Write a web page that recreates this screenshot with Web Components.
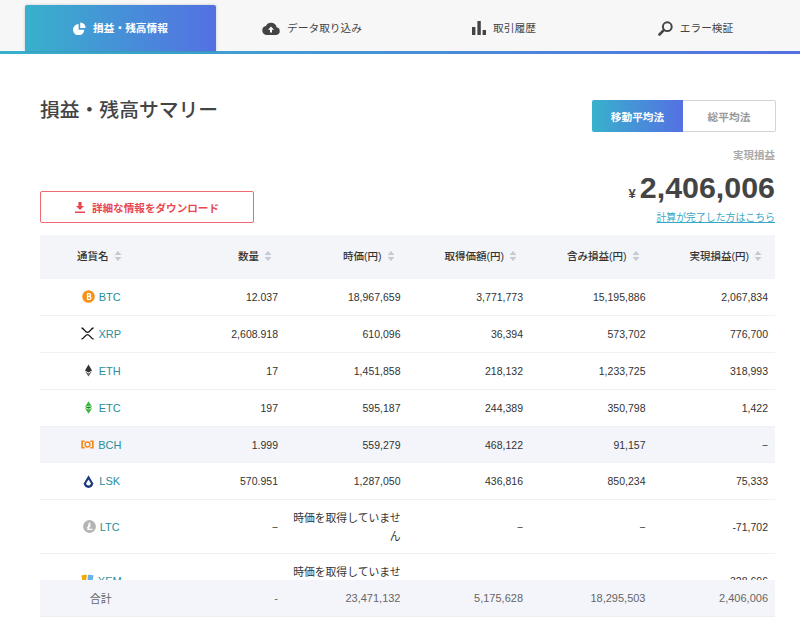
<!DOCTYPE html>
<html lang="ja">
<head>
<meta charset="utf-8">
<title>損益・残高サマリー</title>
<style>
html, body { margin: 0; height: 631px; overflow: hidden; background: #fff; }
body { font-family: "Liberation Sans", "Noto Sans CJK JP", sans-serif; color: #444; }
</style>
</head>
<body>
<app-tabs>
  <tab-item active label="損益・残高情報" icon="pie"></tab-item>
  <tab-item label="データ取り込み" icon="cloud"></tab-item>
  <tab-item label="取引履歴" icon="bars"></tab-item>
  <tab-item label="エラー検証" icon="search"></tab-item>
</app-tabs>
<summary-head></summary-head>
<pl-table></pl-table>

<script>
const tabIcons = {
  pie: '<svg width="13" height="13" viewBox="0 0 13 13"><path fill="#fff" d="M5.6 2.1v5.6h5.6A5.6 5.6 0 1 1 5.6 2.1z"/><path fill="#fff" d="M7.2 0.4A5.5 5.5 0 0 1 12.6 6H7.2z"/></svg>',
  cloud: '<svg width="18" height="13" viewBox="0 0 18 13"><path fill="#444" d="M14.6 5.3A5.6 5.6 0 0 0 4 3.9 4.6 4.6 0 0 0 4.4 13h9.9a3.9 3.9 0 0 0 .3-7.7z"/><path fill="#fff" d="M9 4.6l3 3.2h-2v2.6H8V7.8H6z"/></svg>',
  bars: '<svg width="14" height="14" viewBox="0 0 14 14"><path fill="#444" d="M0 6h3.4v8H0zM5.4 0h3.4v14H5.4zM10.6 9H14v5h-3.4z"/></svg>',
  search: '<svg width="15" height="15" viewBox="0 0 15 15"><circle cx="9.3" cy="5.7" r="4.4" fill="none" stroke="#444" stroke-width="2"/><path stroke="#444" stroke-width="2.6" stroke-linecap="round" d="M5.8 9.2 1.5 13.5"/></svg>'
};

class AppTabs extends HTMLElement {
  constructor() {
    super();
    this.attachShadow({ mode: 'open' }).innerHTML = `
    <style>
      :host { display: block; height: 51px; background: #f7f7f7; border-bottom: 3px solid; border-image: linear-gradient(90deg, #38b1cc, #5470e3) 1; }
      .row { display: grid; grid-template-columns: 191px 192px 192px 191px; padding: 5px 0 0 25px; height: 46px; }
    </style>
    <div class="row"><slot></slot></div>`;
  }
}
customElements.define('app-tabs', AppTabs);

class TabItem extends HTMLElement {
  constructor() {
    super();
    const active = this.hasAttribute('active');
    this.attachShadow({ mode: 'open' }).innerHTML = `
    <style>
      :host { display: flex; align-items: center; justify-content: center; gap: 7px; height: 46px; font-size: 10.7px; color: ${active ? '#fff' : '#444'}; font-weight: ${active ? 700 : 400}; border-radius: 2px 2px 0 0; ${active ? 'background: linear-gradient(90deg, #38b1cc, #5470e3); box-shadow: 0 0 3px rgba(0,0,0,.2);' : ''} }
      svg { display: block; }
      span { position: relative; top: -1px; }
    </style>
    ${tabIcons[this.getAttribute('icon')]}<span>${this.getAttribute('label')}</span>`;
  }
}
customElements.define('tab-item', TabItem);

class MethodToggle extends HTMLElement {
  constructor() {
    super();
    this.attachShadow({ mode: 'open' }).innerHTML = `
    <style>
      :host { display: flex; width: 184px; height: 32px; font-size: 10.7px; font-weight: 700; border-radius: 2px; }
      div { display: flex; align-items: center; justify-content: center; }
      .on { width: 91px; color: #fff; background: linear-gradient(90deg, #38b1cc, #5470e3); border-radius: 2px 0 0 2px; }
      .off { flex: 1; color: #999; border: 1px solid #d4d4d4; border-left: 0; border-radius: 0 2px 2px 0; }
    </style>
    <div class="on">移動平均法</div><div class="off">総平均法</div>`;
  }
}
customElements.define('method-toggle', MethodToggle);

class SummaryHead extends HTMLElement {
  constructor() {
    super();
    this.attachShadow({ mode: 'open' }).innerHTML = `
    <style>
      :host { display: flex; justify-content: space-between; height: 135px; margin: 46px 24px 0 40px; }
      .left { display: flex; flex-direction: column; justify-content: space-between; padding-bottom: 12px; }
      h1 { margin: 0; font-size: 19.8px; line-height: 20px; font-weight: 500; color: #444; }
      .dl { display: flex; align-items: center; justify-content: center; gap: 7px; width: 214px; height: 32px; box-sizing: border-box; border: 1px solid #ee6a70; border-radius: 2px; color: #e8474f; font-size: 10.6px; font-weight: 700; }
      .right { display: flex; flex-direction: column; align-items: flex-end; padding-right: 1px; }
      method-toggle { margin-right: -1px; }
      .lbl { margin-top: 17px; font-size: 10.5px; line-height: 12px; font-weight: 700; color: #aaa; }
      .amt { display: flex; align-items: baseline; gap: 4px; margin-top: 8px; color: #444; font-weight: 700; line-height: 36px; }
      .amt b { font-size: 30.4px; }
      .amt span { font-size: 13px; }
      a { margin-top: -1px; font-size: 9.9px; line-height: 14px; color: #38a9c6; text-decoration: underline; }
    </style>
    <div class="left">
      <h1>損益・残高サマリー</h1>
      <div class="dl"><svg width="10" height="11" viewBox="0 0 10 11"><path fill="#e8474f" d="M3.4 0h3.2v4H9L5 8 1 4h2.4zM0 9.4h10V11H0z"/></svg><span>詳細な情報をダウンロード</span></div>
    </div>
    <div class="right">
      <method-toggle></method-toggle>
      <div class="lbl">実現損益</div>
      <div class="amt"><span>¥</span><b>2,406,006</b></div>
      <a>計算が完了した方はこちら</a>
    </div>`;
  }
}
customElements.define('summary-head', SummaryHead);

const coinIcons = {
  BTC: '<svg viewBox="0 0 13 13"><circle cx="6.5" cy="6.5" r="6.3" fill="#f7931a"/><path fill="none" stroke="#fff" stroke-width="1.3" d="M5 3.6h2.1a1.4 1.4 0 0 1 0 2.8H5m0 0h2.4a1.5 1.5 0 0 1 0 3H5M5.5 3.6v5.8"/></svg>',
  XRP: '<svg viewBox="0 0 13 13"><path fill="none" stroke="#111" stroke-width="1.3" d="M.5 1c2.400 0 3.400 4.400 6 4.400S10.100 1 12.500 1M.5 12c2.400 0 3.400-4.400 6-4.400S10.100 12 12.500 12"/></svg>',
  ETH: '<svg viewBox="0 0 13 13"><path fill="#333" d="M6.500.5 10 6.500 6.500 8.600 3 6.500z"/><path fill="#666" d="M3 7.300l3.500 2.100L10 7.300 6.500 12.500z"/></svg>',
  ETC: '<svg viewBox="0 0 13 13"><path fill="#3ab83a" d="M6.500.3 10.200 6.200 6.500 4.700 2.800 6.200zM2.800 7l3.700 1.500L10.200 7 6.500 12.700z"/><path fill="#0b8311" d="M6.500 5.500 9.500 6.500 6.500 7.700 3.500 6.500z"/></svg>',
  BCH: '<svg viewBox="0 0 13 13"><path fill="#f58a1f" d="M.3 2.500h3.400v1.600H2v4.800h1.700v1.600H.3zM12.700 2.500H9.300v1.600H11v4.800H9.300v1.600h3.400z"/><circle cx="6.500" cy="6.500" r="2.400" fill="none" stroke="#f58a1f" stroke-width="1.500"/></svg>',
  LSK: '<svg viewBox="0 0 13 13"><path fill="#1a3a80" d="M6.500.2 11.200 8.200a4.700 4.700 0 0 1-9.400 0z"/><path fill="#fff" d="M6.500 4.400 8.800 8.300a2.300 2.300 0 1 1-4.600 0z"/></svg>',
  LTC: '<svg viewBox="0 0 13 13"><circle cx="6.500" cy="6.500" r="6.400" fill="#b5b5b5"/><path fill="#fff" d="M5.800 2.800h1.800L6.800 6l1.300-.5-.3 1-1.300.5-.4 1.700h3.600l-.3 1.200H4.100l.6-2.300-1 .4.300-1 1-.4z"/></svg>',
  XEM: '<svg viewBox="0 0 13 13"><path fill="#f7a800" d="M.5 1.500C2 .8 4 .6 6 .9L5 6 1.500 7.500z"/><path fill="#67b2e8" d="M7 .9c2-.2 4 .1 5.500.7L11.500 7 6.500 6z"/></svg>'
};

const rows = [
  ['BTC', '12.037', '18,967,659', '3,771,773', '15,195,886', '2,067,834'],
  ['XRP', '2,608.918', '610,096', '36,394', '573,702', '776,700'],
  ['ETH', '17', '1,451,858', '218,132', '1,233,725', '318,993'],
  ['ETC', '197', '595,187', '244,389', '350,798', '1,422'],
  ['BCH', '1.999', '559,279', '468,122', '91,157', '−'],
  ['LSK', '570.951', '1,287,050', '436,816', '850,234', '75,333'],
  ['LTC', '−', '時価を取得していません', '−', '−', '-71,702'],
  ['XEM', '−', '時価を取得していません', '−', '−', '328,696']
];
const heads = ['数量', '時価(円)', '取得価額(円)', '含み損益(円)', '実現損益(円)'];
const sortIcon = '<svg width="8" height="10" viewBox="0 0 8 10"><path fill="#c5c9d3" d="M4 0l3.500 4H.5zM4 10 .5 6h7z"/></svg>';

class PlTable extends HTMLElement {
  constructor() {
    super();
    const head = heads.map(h => `<div class="h">${h}${sortIcon}</div>`).join('');
    const body = rows.map(r => `
      <div class="r${r[0] === 'BCH' ? ' hi' : ''}">
        <div class="c coin"><span class="ic">${coinIcons[r[0]]}</span>${r[0]}</div>
        ${r.slice(1).map(v => `<div class="c${v.length > 10 ? ' jp' : ''}">${v}</div>`).join('')}
      </div>`).join('');
    this.attachShadow({ mode: 'open' }).innerHTML = `
    <style>
      :host { display: block; margin: 0 25px 0 40px; font-size: 10.5px; color: #333; }
      .r, .head, .foot { display: grid; grid-template-columns: repeat(6, 1fr); }
      .clip { height: 345px; overflow: hidden; }
      .head { height: 44px; padding-bottom: 3px; box-sizing: border-box; background: #f4f5f8; font-weight: 500; align-items: center; }
      .h { display: flex; justify-content: flex-end; align-items: center; gap: 5px; padding-right: 13px; font-size: 10.5px; }
      .h.first { justify-content: center; padding: 0 4px 0 0; }
      .r { border-bottom: 1px solid #f0f1f6; box-sizing: border-box; min-height: 36.9px; align-items: center; }
      .r.hi { background: #f4f5fa; }
      .c { padding: 8.5px 7px; text-align: right; line-height: 18px; }
      .c.jp { font-size: 10.8px; }
      .coin { display: flex; align-items: center; justify-content: center; gap: 4px; color: #2a8c9c; padding-right: 7px; font-size: 11px; }
      .ic { display: block; width: 13px; height: 13px; }
      .ic svg { display: block; width: 100%; height: 100%; }
      .foot { height: 37px; background: #f4f5fa; border-bottom: 1px solid #eceef4; box-sizing: border-box; align-items: center; color: #666; font-size: 11px; }
      .foot div { padding: 0 7px; text-align: right; }
      .foot div:first-child { text-align: center; padding-right: 8px; }
    </style>
    <div class="clip">
      <div class="head"><div class="h first">通貨名${sortIcon}</div>${head}</div>
      ${body}
    </div>
    <div class="foot"><div>合計</div><div>-</div><div>23,471,132</div><div>5,175,628</div><div>18,295,503</div><div>2,406,006</div></div>`;
  }
}
customElements.define('pl-table', PlTable);
</script>
</body>
</html>
